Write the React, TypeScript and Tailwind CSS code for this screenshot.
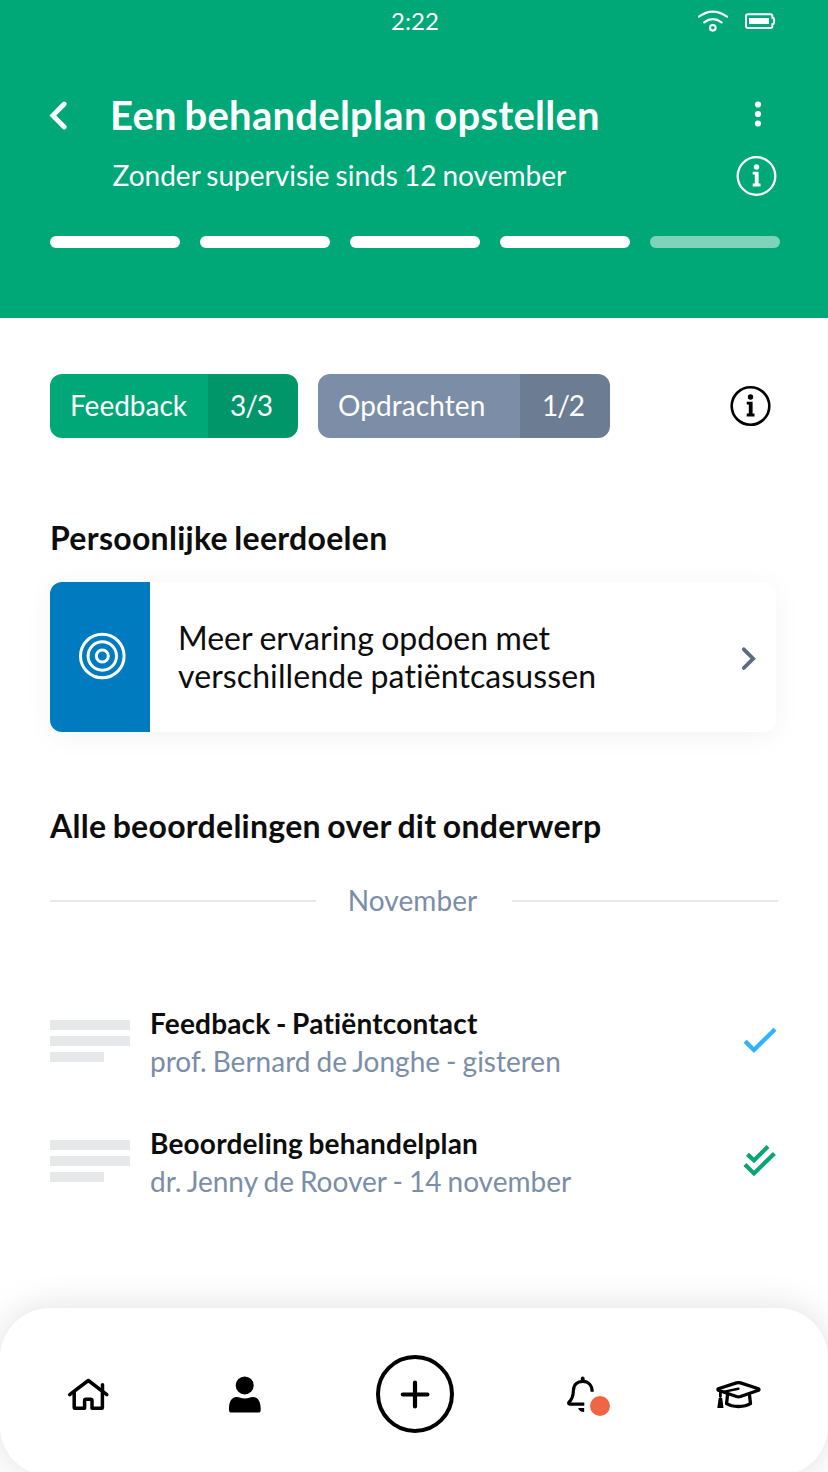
import React from 'react';

function InfoIcon({ strokeWidth }: { strokeWidth: number }) {
  return (
    <svg width="40" height="40" viewBox="-0.5 0 40 40" fill="none" stroke="currentColor" className="shrink-0 overflow-visible">
      <circle cx="20" cy="20" r="18.8" strokeWidth={strokeWidth} />
      <circle cx="20" cy="11" r="2.7" fill="currentColor" stroke="none" />
      <path d="M16.2 15.7h5.9v11.8h1.9v2.9h-7.8v-2.9h2.1v-8.9h-2.1z" fill="currentColor" stroke="none" />
    </svg>
  );
}

function StatusIcons() {
  return (
    <svg width="78" height="24" viewBox="698 9 78 24" fill="none" stroke="white" strokeLinecap="round">
      <path d="M699 16.6Q712.7 6.6 727 16.6" strokeWidth="2.2" />
      <path d="M704.2 22.4Q712.7 16 721.6 22.4" strokeWidth="2.2" />
      <circle cx="712.8" cy="27.8" r="2.8" strokeWidth="2.1" />
      <path d="M748 14.3h22.4q2 0 2 2v1.4q1.7 0 1.7 2v2.6q0 2-1.7 2v1.6q0 2-2 2H748q-2 0-2-2v-9.6q0-2 2-2z" strokeWidth="2" />
      <path d="M749 18h20v6h-20z" fill="white" stroke="none" />
    </svg>
  );
}

function Header() {
  return (
    <header className="h-[318px] shrink-0 bg-[#00a878] text-white">
      <div className="grid h-[42px] grid-cols-3 items-center">
        <span />
        <span className="pl-0.5 text-center text-[24px] leading-[42px]">2:22</span>
        <div className="flex justify-end pr-[52px]">
          <StatusIcons />
        </div>
      </div>
      <div className="mt-[43px] flex h-[60px] items-center pr-[64px] pl-[48px]">
        <svg width="20" height="30" viewBox="48 100 20 30" fill="none" stroke="white" strokeWidth="4.8" strokeLinecap="round">
          <path d="M64.2 104L52.8 115.5L64.2 127" strokeLinejoin="miter" />
        </svg>
        <h1 className="ml-[42px] flex-1 text-[40px] leading-[60px] font-bold tracking-[0.27px] whitespace-nowrap [word-spacing:-2.4px]">Een behandelplan opstellen</h1>
        <svg width="12" height="28" viewBox="0 0 12 28" fill="white" className="mb-0.5">
          <circle cx="6" cy="4.5" r="3.1" />
          <circle cx="6" cy="14" r="3.1" />
          <circle cx="6" cy="23.5" r="3.1" />
        </svg>
      </div>
      <div className="mt-[11px] flex h-[40px] items-center justify-between pr-[52px] pl-[112.5px]">
        <p className="mb-0.5 text-[28px] leading-[40px] whitespace-nowrap [word-spacing:-1.1px]">Zonder supervisie sinds 12 november</p>
        <InfoIcon strokeWidth={2.3} />
      </div>
      <div className="mt-[40px] flex gap-5 pl-[50px]">
        <span className="h-3 w-[130px] rounded-full bg-white" />
        <span className="h-3 w-[130px] rounded-full bg-white" />
        <span className="h-3 w-[130px] rounded-full bg-white" />
        <span className="h-3 w-[130px] rounded-full bg-white" />
        <span className="h-3 w-[130px] rounded-full bg-[#80d3bb]" />
      </div>
    </header>
  );
}

function Filters() {
  return (
    <div className="flex items-center pt-[56px] pr-[58px] pl-[50px]">
      <div className="flex h-16 overflow-hidden rounded-[12px] text-[28px] leading-[62px] text-white">
        <span className="w-[158px] bg-[#00a878] pl-5">Feedback</span>
        <span className="w-[90px] bg-[#009669] pr-[4px] text-center tracking-[-1.1px]">3/3</span>
      </div>
      <div className="ml-5 flex h-16 overflow-hidden rounded-[12px] text-[28px] leading-[62px] text-white">
        <span className="w-[202px] bg-[#7b8da7] pl-5 tracking-[0.08px]">Opdrachten</span>
        <span className="w-[90px] bg-[#6c7d93] pr-[4px] text-center tracking-[-1.1px]">1/2</span>
      </div>
      <div className="ml-auto text-black">
        <InfoIcon strokeWidth={2.6} />
      </div>
    </div>
  );
}

function GoalCard() {
  return (
    <div className="mr-[52px] ml-[50px] flex h-[150px] items-center rounded-[12px] bg-white shadow-[0_4px_28px_rgba(0,0,0,0.05)]">
      <div className="flex h-full w-[100px] items-center justify-center rounded-l-[12px] bg-[#007bc0] pb-0.5 pl-1">
        <svg width="48" height="48" viewBox="-0.3 0 48 48" fill="none" stroke="white" strokeWidth="3" className="overflow-visible">
          <circle cx="24" cy="24" r="21.8" />
          <circle cx="24" cy="24" r="14.2" />
          <circle cx="24" cy="24" r="6" />
        </svg>
      </div>
      <p className="ml-7 flex-1 text-[32px] leading-[38px] text-[#0d0d0d]">
        <span className="[word-spacing:-0.8px]">Meer ervaring opdoen met</span>
        <br />
        <span className="tracking-[0.1px] [word-spacing:-0.9px]">verschillende patiëntcasussen</span>
      </p>
      <svg width="18" height="26" viewBox="740 646 18 26" fill="none" stroke="#5d6b80" strokeWidth="3.8" strokeLinecap="round" className="mt-1 mr-[18px]">
        <path d="M743.8 649.3L753.2 658.7L743.8 668" />
      </svg>
    </div>
  );
}

function Review({ title, meta, double }: { title: string; meta: string; double?: boolean }) {
  return (
    <div className="flex h-[120px] items-start">
      <div className="mt-4 flex w-[80px] flex-col gap-1.5">
        <span className="h-2.5 bg-[#e6e8ea]" />
        <span className="h-2.5 bg-[#e6e8ea]" />
        <span className="h-2.5 w-[54px] bg-[#e6e8ea]" />
      </div>
      <div className="ml-5 flex-1 text-[28px] leading-[38px] whitespace-nowrap">
        <p className="font-bold tracking-[0.19px] text-[#0d0d0d] [word-spacing:-1.5px]">{title}</p>
        <p className="text-[#7b8da7] [word-spacing:-1.1px]">{meta}</p>
      </div>
      {double ? (
        <svg width="36" height="36" viewBox="742 1142 36 36" fill="none" stroke="#0aa574" strokeWidth="4.2" className="mt-[18px]">
          <path d="M747.4 1154.4L754 1160.4L768 1146.4" />
          <path d="M744.9 1164.6L754 1173.4L774.4 1153.4" />
        </svg>
      ) : (
        <svg width="36" height="36" viewBox="742 1022 36 36" fill="none" stroke="#30b4f8" strokeWidth="4.3" className="mt-[18px]">
          <path d="M745.1 1041.2L754 1050L775 1029.2" />
        </svg>
      )}
    </div>
  );
}

function BottomNav() {
  return (
    <nav className="flex h-[168px] shrink-0 items-center rounded-[50px] bg-white text-black shadow-[0_0_36px_rgba(0,0,0,0.13)]">
      <svg width="44" height="36" viewBox="66 1377 44 36" fill="none" stroke="currentColor" strokeWidth="3.5" strokeLinecap="round" strokeLinejoin="round" className="mt-[6px] ml-[66px]">
        <path d="M69.7 1394.7L88.3 1380.5L106.8 1394.7" />
        <path d="M102.5 1384.8V1391" />
        <path d="M74.2 1392.5V1407.8Q74.2 1408.3 74.8 1408.3H84.6V1400.6Q84.6 1399.2 86 1399.2H90.6Q92 1399.2 92 1400.6V1408.3H101.8Q102.4 1408.3 102.4 1407.8V1392.5" />
      </svg>
      <svg width="34" height="38" viewBox="228 1375 34 38" fill="currentColor" className="mt-[4px] ml-[118px]">
        <circle cx="244.7" cy="1385.4" r="9" />
        <path d="M229 1408.5C229 1402 231.5 1397 236.5 1397C239.5 1397 241 1398.5 244.8 1398.5S250 1397 253 1397C258 1397 260.7 1402 260.7 1408.5V1410Q260.7 1412.6 258.1 1412.6H231.6Q229 1412.6 229 1410Z" />
      </svg>
      <svg width="80" height="80" viewBox="375 1354 80 80" fill="none" stroke="currentColor" strokeWidth="4" className="mt-[4px] ml-[113px]">
        <circle cx="415" cy="1394" r="37" />
        <path d="M402.8 1394.5h24.6M415 1382.5v24" strokeWidth="4.2" strokeLinecap="round" />
      </svg>
      <svg width="48" height="44" viewBox="564 1374 48 44" fill="none" stroke="currentColor" strokeWidth="3.2" className="mt-[8px] ml-[109px]">
        <path d="M582.7 1378.4v2" strokeWidth="3.8" strokeLinecap="round" />
        <path d="M584.3 1404.2H569.7Q568 1403.8 569 1402.2C572 1399.5 573.2 1396 573.4 1390.5C573.6 1384.5 577.5 1381.4 582.7 1381.4C588.5 1381.4 592.2 1385.5 592.2 1391.8" />
        <path d="M578.2 1408h6v4q-5 0-6-4z" fill="currentColor" stroke="none" />
        <circle cx="600" cy="1406" r="10" fill="#f06645" stroke="none" />
      </svg>
      <svg width="48" height="32" viewBox="714 1379 48 32" fill="none" stroke="currentColor" strokeWidth="3.3" strokeLinejoin="round" strokeLinecap="round" className="mt-[6px] ml-[102px]">
        <path d="M718.3 1388.7Q717.5 1389.6 718.4 1390.3L736.5 1396.5Q738.5 1397.1 740.5 1396.5L758.5 1390.3Q759.5 1389.6 758.5 1388.7L740.5 1382.9Q738.5 1382.3 736.5 1382.9Z" />
        <path d="M738.4 1388.7L724.5 1391.6" strokeWidth="2.5" />
        <path d="M727.5 1395L726.6 1403.7Q731 1406.5 738.5 1406.5Q746 1406.5 750.5 1403.7L749.5 1395" />
        <path d="M720.4 1392.5V1396.5" strokeWidth="2.8" />
        <path d="M718.7 1398h3.5l1.3 10h-6.2z" fill="currentColor" stroke="none" />
      </svg>
    </nav>
  );
}

export default function App() {
  return (
    <div className="flex h-[1472px] w-[828px] flex-col overflow-hidden bg-white font-['Lato',sans-serif] [font-variant-ligatures:none]">
      <Header />
      <main className="h-[990px] shrink-0">
        <Filters />
        <h2 className="mt-[79px] mb-[23px] pl-[50px] text-[32px] leading-[42px] font-bold tracking-[0.29px] text-[#0d0d0d] [word-spacing:-1.7px]">Persoonlijke leerdoelen</h2>
        <GoalCard />
        <h2 className="mt-[73px] pl-[50px] text-[32px] leading-[42px] font-bold tracking-[0.28px] text-[#0d0d0d] [word-spacing:-1.7px]">Alle beoordelingen over dit onderwerp</h2>
        <div className="mt-[33px] flex h-[42px] items-center px-[50px]">
          <span className="h-0.5 w-[266px] bg-[#e6e8ea]" />
          <span className="mb-0.5 flex-1 pr-[3px] text-center text-[28px] leading-[40px] tracking-[0.08px] text-[#7b8da7]">November</span>
          <span className="h-0.5 w-[266px] bg-[#e6e8ea]" />
        </div>
        <div className="mt-[82px] px-[50px]">
          <Review title="Feedback - Patiëntcontact" meta="prof. Bernard de Jonghe - gisteren" />
          <Review title="Beoordeling behandelplan" meta="dr. Jenny de Roover - 14 november" double />
        </div>
      </main>
      <BottomNav />
    </div>
  );
}
